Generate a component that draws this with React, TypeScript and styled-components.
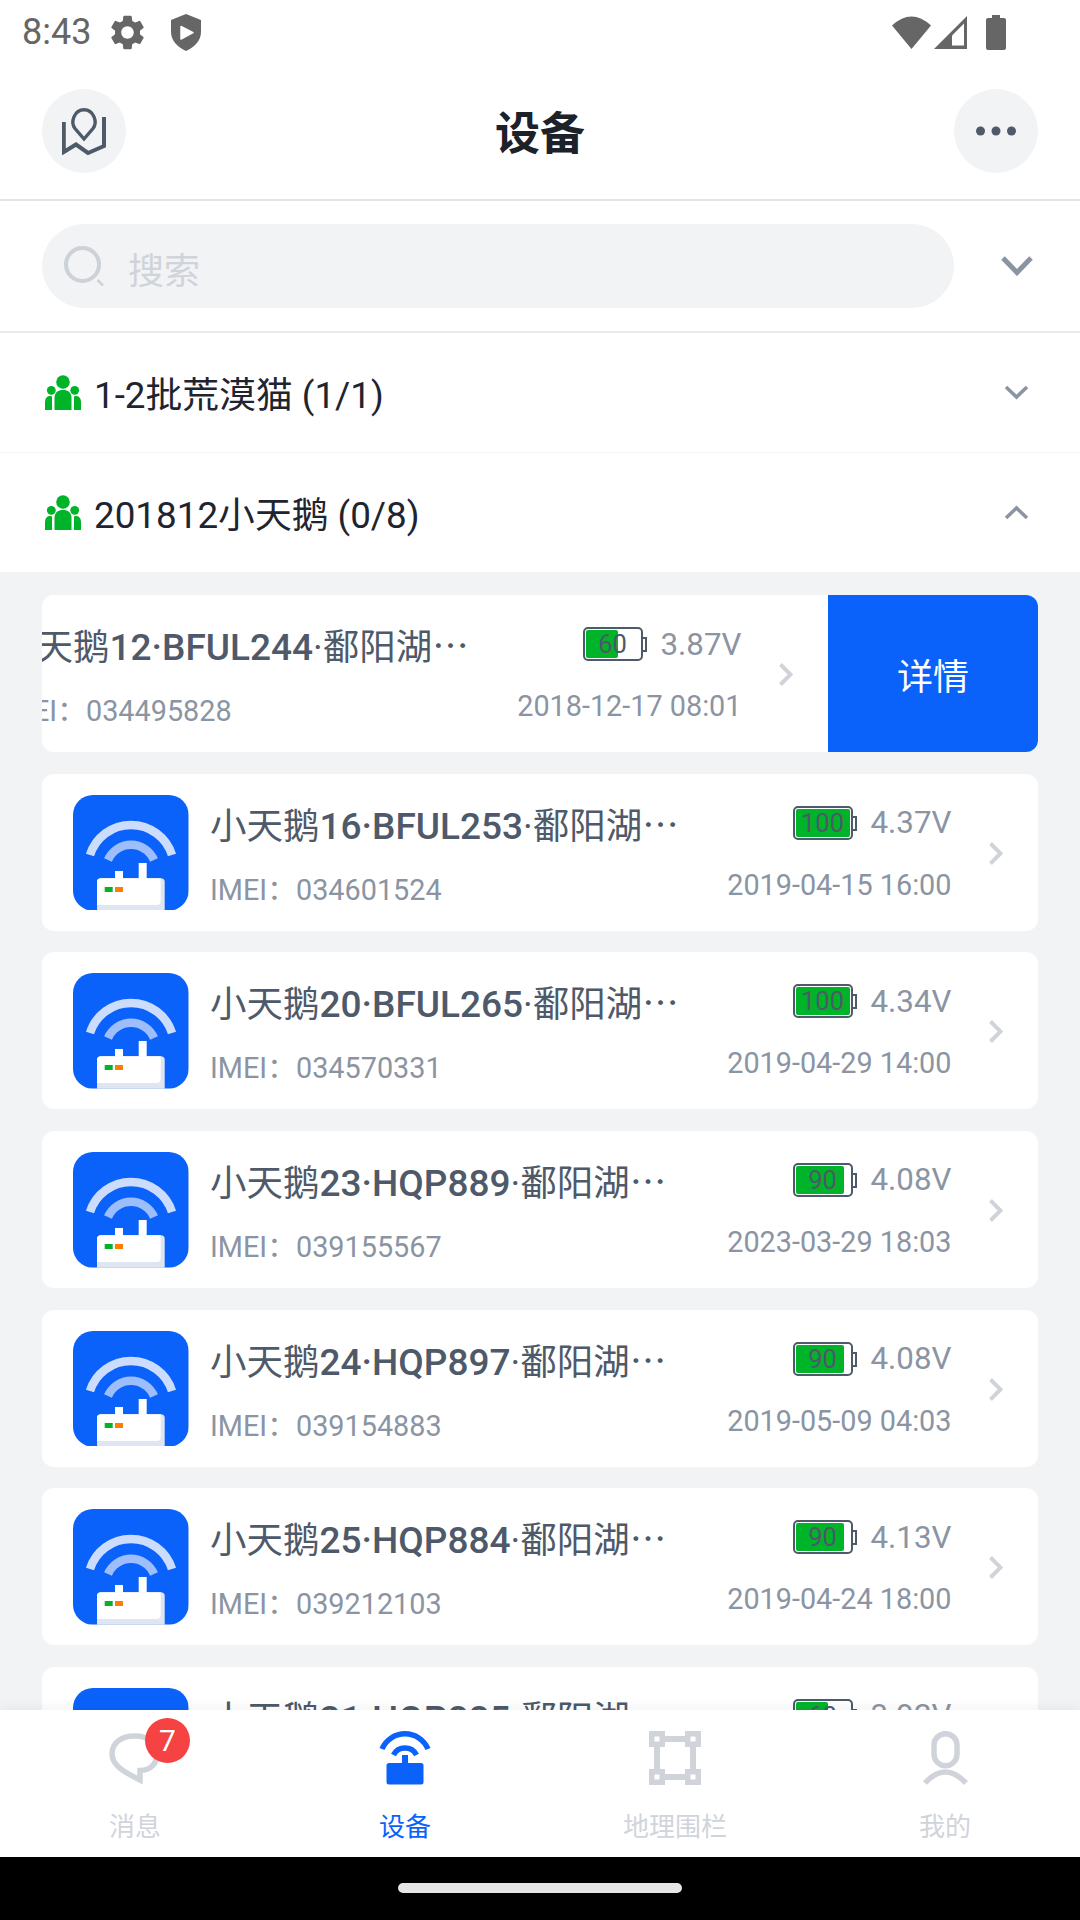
import React from "react";
import styled, { createGlobalStyle } from "styled-components";

const Global = createGlobalStyle`
  html, body { margin: 0; padding: 0; background: #fff; }
  * { box-sizing: border-box; }
  body { font-family: Roboto, "Noto Sans CJK SC", sans-serif; }
`;

const Page = styled.div`
  width: 1080px;
  height: 1920px;
  display: flex;
  flex-direction: column;
  overflow: hidden;
  background: #fff;
`;

const StatusBar = styled.div`
  height: 64px;
  flex: none;
  display: flex;
  align-items: center;
  padding: 0 74px 0 22px;
  color: #666;
`;
const Time = styled.span`
  font-size: 36px;
  line-height: 64px;
  width: 89px;
`;
const StatusRight = styled.div`
  margin-left: auto;
  display: flex;
  align-items: center;
`;

const Header = styled.header`
  height: 137px;
  flex: none;
  display: flex;
  align-items: flex-start;
  justify-content: space-between;
  padding: 25px 42px 0;
  border-bottom: 2px solid #e2e4e7;
`;
const RoundButton = styled.div`
  width: 84px;
  height: 84px;
  border-radius: 50%;
  background: #f2f3f5;
  display: flex;
  align-items: center;
  justify-content: center;
`;
const Title = styled.h1`
  margin: 0;
  font-size: 45px;
  line-height: 84px;
  font-weight: 700;
  color: #1d2129;
  font-family: "Noto Sans CJK SC", sans-serif;
`;

const SearchRow = styled.div`
  height: 132px;
  flex: none;
  display: flex;
  padding: 23px 47px 0 42px;
  justify-content: space-between;
  border-bottom: 2px solid #e8e9ec;
`;
const SearchPill = styled.div`
  width: 912px;
  height: 84px;
  border-radius: 42px;
  background: #f2f3f5;
  display: flex;
  align-items: center;
  padding-left: 22px;
  gap: 24px;
`;
const Placeholder = styled.span`
  font-size: 36px;
  line-height: 84px;
  padding-top: 4px;
  color: #d0d4da;
  font-family: "Noto Sans CJK SC", sans-serif;
`;
const SearchChevron = styled.div`
  height: 84px;
  display: flex;
  align-items: center;
`;

const GroupRow = styled.div`
  height: 120px;
  flex: none;
  display: flex;
  align-items: center;
  padding: 0 51px 0 45px;
  background: #fff;
  border-bottom: 1px solid #f2f3f5;
`;
const GroupName = styled.span`
  margin-left: 13px;
  margin-top: -2px;
  font-size: 36.8px;
  color: #1f2530;
  flex: 1;
`;

const List = styled.div`
  flex: 1;
  min-height: 0;
  overflow: hidden;
  background: #f2f3f5;
  padding: 22px 42px 0;
  display: flex;
  flex-direction: column;
  gap: 21.67px;
`;
const Card = styled.div`
  flex: none;
  height: 157px;
  border-radius: 12px;
  background: #fff;
  overflow: hidden;
  display: flex;
`;
const CardBody = styled.div<{ $offset: number }>`
  flex: 0 0 996px;
  margin-left: ${(p) => -p.$offset}px;
  display: flex;
  padding: 21px 0 0 31.3px;
  background: #fff;
`;
const DetailAction = styled.div`
  flex: 0 0 210px;
  height: 157px;
  background: #0b62fb;
  color: #fff;
  font-size: 36px;
  display: flex;
  align-items: center;
  justify-content: center;
  font-family: "Noto Sans CJK SC", sans-serif;
`;
const DeviceIcon = styled.svg`
  flex: none;
  width: 115.7px;
  height: 115.7px;
  display: block;
`;
const Main = styled.div`
  flex: 0 0 470px;
  margin-left: 21px;
  min-width: 0;
`;
const DeviceName = styled.div`
  font-family: "Noto Sans CJK SC", sans-serif;
  font-size: 36.5px;
  line-height: 46px;
  margin-top: 6px;
  color: #4e5969;
  white-space: nowrap;
  overflow: hidden;
  text-overflow: ellipsis;
`;
const Code = styled.span`
  font-family: Roboto, sans-serif;
  font-weight: 500;
  font-size: 37px;
`;
const Dot = styled.span`
  font-family: Roboto, sans-serif;
  font-size: 37px;
`;
const Imei = styled.div`
  font-size: 28.8px;
  line-height: 40px;
  margin-top: 20px;
  color: #8a94a3;
`;
const Meta = styled.div`
  flex: 0 0 271.5px;
  display: flex;
  flex-direction: column;
  align-items: flex-end;
  padding-top: 11px;
`;
const PowerRow = styled.div`
  height: 34px;
  display: flex;
  align-items: center;
  gap: 14px;
  color: #8a94a3;
  font-size: 31.3px;
`;
const Time2 = styled.div`
  margin-top: 25px;
  font-size: 28.8px;
  line-height: 40px;
  color: #8a94a3;
`;
const Chevron = styled.div`
  margin-left: 37.5px;
  margin-top: 47px;
`;

const Battery = styled.div`
  position: relative;
  width: 64px;
  height: 34px;
  padding-right: 4px;
`;
const BatteryShell = styled.div`
  width: 60px;
  height: 34px;
  border: 2.5px solid #4e5969;
  border-radius: 5px;
  padding: 1px;
`;
const BatteryFill = styled.div`
  height: 100%;
  border-radius: 2px;
  background: #00b42a;
`;
const BatteryTip = styled.div`
  position: absolute;
  right: 0;
  top: 10px;
  width: 5px;
  height: 15px;
  border: 2px solid #4e5969;
  border-left: none;
`;
const BatteryText = styled.span`
  position: absolute;
  left: 0;
  top: 0;
  width: 60px;
  text-align: center;
  font-size: 25.5px;
  line-height: 35px;
  color: #4e5969;
`;

const TabBar = styled.nav`
  position: relative;
  z-index: 2;
  height: 147px;
  flex: none;
  display: grid;
  grid-template-columns: repeat(4, 1fr);
  background: #fff;
  box-shadow: 0 -3px 12px rgba(0, 0, 0, 0.05);
  padding-top: 21px;
`;
const Tab = styled.div<{ $active?: boolean }>`
  display: flex;
  flex-direction: column;
  align-items: center;
  color: ${(p) => (p.$active ? "#0b62fb" : "#d0d4da")};
`;
const TabIconWrap = styled.div`
  position: relative;
  width: 60px;
  height: 54px;
`;
const TabLabel = styled.span`
  margin-top: 22px;
  font-size: 26px;
  line-height: 36px;
  font-family: "Noto Sans CJK SC", sans-serif;
`;
const Badge = styled.span`
  position: absolute;
  left: 40px;
  top: -13px;
  width: 45px;
  height: 45px;
  border-radius: 50%;
  background: #f54242;
  color: #fff;
  font-size: 30px;
  line-height: 45px;
  text-align: center;
`;

const NavBar = styled.div`
  height: 63px;
  flex: none;
  background: #000;
  display: flex;
  justify-content: center;
  padding-top: 26px;
`;
const NavPill = styled.div`
  width: 284px;
  height: 10px;
  border-radius: 5px;
  background: #e6e6e6;
`;

const Gear = () => (
  <svg width="33" height="35" viewBox="2.5 2 19 20" fill="#666">
    <path d="M19.14 12.94c.04-.3.06-.61.06-.94 0-.32-.02-.64-.07-.94l2.03-1.58c.18-.14.23-.41.12-.61l-1.92-3.32c-.12-.22-.37-.29-.59-.22l-2.39.96c-.5-.38-1.03-.7-1.62-.94l-.36-2.54c-.04-.24-.24-.41-.48-.41h-3.84c-.24 0-.43.17-.47.41l-.36 2.54c-.59.24-1.13.57-1.62.94l-2.39-.96c-.22-.08-.47 0-.59.22L2.74 8.87c-.12.21-.08.47.12.61l2.03 1.58c-.05.3-.09.63-.09.94s.02.64.07.94l-2.03 1.58c-.18.14-.23.41-.12.61l1.92 3.32c.12.22.37.29.59.22l2.39-.96c.5.38 1.03.7 1.62.94l.36 2.54c.05.24.24.41.48.41h3.84c.24 0 .44-.17.47-.41l.36-2.54c.59-.24 1.13-.56 1.62-.94l2.39.96c.22.08.47 0 .59-.22l1.92-3.32c.12-.22.07-.47-.12-.61l-2.01-1.58zM12 15.6c-1.98 0-3.6-1.62-3.6-3.6s1.62-3.6 3.6-3.6 3.6 1.62 3.6 3.6-1.62 3.6-3.6 3.6z" />
  </svg>
);
const Shield = () => (
  <svg width="30" height="37" viewBox="0 0 30 37" style={{ marginLeft: 27 }}>
    <path d="M15 0 L30 6 V18 C30 27 23 33.5 15 37 C7 33.5 0 27 0 18 V6Z" fill="#666" />
    <path d="M10 12.5 L10 25 L22 18.7Z" fill="#fff" stroke="#fff" strokeWidth="1.5" strokeLinejoin="round" />
  </svg>
);
const Wifi = () => (
  <svg width="39" height="33" viewBox="0 0 39 33" fill="#666">
    <path d="M0 9.5 Q19.5 -8.5 39 9.5 L19.5 33Z" />
  </svg>
);
const Signal = () => (
  <svg width="33" height="33" viewBox="0 0 33 33" style={{ marginLeft: 3 }}>
    <path d="M33 0 V33 H0Z" fill="#666" />
    <path d="M18 29.5 H30 V7.5 L18 19.5Z" fill="#fff" />
  </svg>
);
const PhoneBattery = () => (
  <svg width="20" height="35" viewBox="0 0 20 35" fill="#666" style={{ marginLeft: 19 }}>
    <path d="M6 0 H14 V3 H18 Q20 3 20 5 V33 Q20 35 18 35 H2 Q0 35 0 33 V5 Q0 3 2 3 H6Z" />
  </svg>
);
const MapIcon = () => (
  <svg width="44" height="47" viewBox="0 0 44 47" fill="none" stroke="#4e5969" strokeWidth="3.4">
    <path d="M22 31 L13 20.5 C8 14 12.5 1.7 22 1.7 C31.5 1.7 36 14 31 20.5 Z" />
    <path d="M1.8 14 V44 L14 36.5 L26 45 L42 38 V9" strokeWidth="4" />
  </svg>
);
const Dots = () => (
  <svg width="40" height="10" viewBox="0 0 40 10" fill="#4e5969">
    <circle cx="4.5" cy="5" r="4.5" />
    <circle cx="20" cy="5" r="4.5" />
    <circle cx="35.5" cy="5" r="4.5" />
  </svg>
);
const SearchIcon = () => (
  <svg width="40" height="40" viewBox="0 0 40 40" fill="none" stroke="#cdd2d8">
    <circle cx="18.5" cy="18.5" r="16.5" strokeWidth="4" />
    <path d="M33.5 34 L39 39.5" strokeWidth="2.5" />
  </svg>
);
const ChevronDownBold = () => (
  <svg width="32" height="20" viewBox="0 0 32 20" fill="none" stroke="#8a94a3" strokeWidth="5">
    <path d="M2 2 L16 16.5 L30 2" />
  </svg>
);
const ChevronV = ({ up }: { up?: boolean }) => (
  <svg width="25" height="15" viewBox="0 0 25 15" fill="none" stroke="#8a94a3" strokeWidth="3.5">
    <path d={up ? "M2 13 L12.5 3 L23 13" : "M2 2 L12.5 12 L23 2"} />
  </svg>
);
const ChevronRight = () => (
  <svg width="14" height="23" viewBox="0 0 14 23" fill="none" stroke="#d0d4da" strokeWidth="4" style={{ display: "block" }}>
    <path d="M1.5 1.5 L11.5 11.5 L1.5 21.5" />
  </svg>
);
const GroupIcon = () => (
  <svg width="36" height="35" viewBox="0 0 36 35" fill="#00b42a" style={{ flex: "none" }}>
    <circle cx="18" cy="7" r="6.8" />
    <circle cx="6.3" cy="15.3" r="4.4" />
    <circle cx="29.7" cy="15.3" r="4.4" />
    <path d="M9.5 35 V23 C9.5 17.5 13 15 18 15 C23 15 26.5 17.5 26.5 23 V35Z" />
    <path d="M0 35 V27 C0 23.5 1.5 21.5 4 21 C5 21 6 21 7 21.5 V35Z" />
    <path d="M36 35 V27 C36 23.5 34.5 21.5 32 21 C31 21 30 21 29 21.5 V35Z" />
  </svg>
);
const RouterTile = () => (
  <DeviceIcon viewBox="0 0 115.7 115.7">
    <defs>
      <clipPath id="tile">
        <rect width="115.7" height="115.7" rx="20" />
      </clipPath>
    </defs>
    <g clipPath="url(#tile)">
      <rect width="115.7" height="115.7" fill="#0b62fb" />
      <path d="M17 60 A43 43 0 0 1 99 60" fill="none" stroke="#cbdcfc" strokeWidth="8.5" />
      <path d="M35 65 A25 25 0 0 1 81 65" fill="none" stroke="#9dbefb" strokeWidth="8.5" />
      <rect x="42" y="76" width="8" height="9" fill="#fff" />
      <rect x="65.7" y="68" width="8" height="17" fill="#fff" />
      <path d="M24 116 V87 Q24 83.3 28 83.3 H87.7 Q91.7 83.3 91.7 87 V116Z" fill="#e0e6f1" />
      <path d="M24 110 V87 Q24 83.3 28 83.3 H87.7 V106 Q87.7 110 83.7 110Z" fill="#fff" />
      <rect x="31.7" y="92" width="8" height="5" fill="#00b42a" />
      <rect x="42" y="92" width="8" height="5" fill="#ff7d00" />
    </g>
  </DeviceIcon>
);

const MessageIcon = () => (
  <svg width="60" height="54" viewBox="0 0 60 54" fill="none" stroke="currentColor" strokeWidth="5.5">
    <path d="M35 49 V39.5 C46 39.5 52 32 52 23 C52 11.5 43 5 29.5 5 C16 5 7 12 7 23 C7 35 21 42 35 49Z" />
  </svg>
);
const DeviceTabIcon = () => (
  <svg width="60" height="54" viewBox="0 0 60 54" fill="currentColor">
    <path d="M7 18 A25 25 0 0 1 53 18" fill="none" stroke="currentColor" strokeWidth="5.5" />
    <path d="M18.5 24 A13 13 0 0 1 41.5 24" fill="none" stroke="currentColor" strokeWidth="5.5" />
    <rect x="27" y="24" width="6" height="9" />
    <rect x="11.5" y="32" width="37" height="21.5" rx="2.5" />
  </svg>
);
const FenceIcon = () => (
  <svg width="60" height="54" viewBox="0 0 60 54" fill="currentColor">
    <path
      fillRule="evenodd"
      d="M4 0 H20 V5 H40 V0 H56 V16 H51 V38 H56 V54 H40 V49 H20 V54 H4 V38 H9 V16 H4Z M9.5 5.5 V10.5 H14.5 V5.5Z M45.5 5.5 V10.5 H50.5 V5.5Z M9.5 43.5 V48.5 H14.5 V43.5Z M45.5 43.5 V48.5 H50.5 V43.5Z M20 11 V16 H15 V38 H20 V43 H40 V38 H45 V16 H40 V11Z"
    />
  </svg>
);
const UserIcon = () => (
  <svg width="60" height="54" viewBox="0 0 60 54" fill="none" stroke="currentColor" strokeWidth="5.5">
    <rect x="19" y="2.7" width="23" height="32" rx="11.5" />
    <path d="M10 52 Q30 30 51 52" />
  </svg>
);

type Device = {
  pre: string;
  num: string;
  code: string;
  imei: string;
  level: number;
  volts: string;
  at: string;
  offset?: number;
};
const devices: Device[] = [
  { pre: "小天鹅", num: "12", code: "BFUL244", imei: "034495828", level: 60, volts: "3.87V", at: "2018-12-17 08:01", offset: 210 },
  { pre: "小天鹅", num: "16", code: "BFUL253", imei: "034601524", level: 100, volts: "4.37V", at: "2019-04-15 16:00" },
  { pre: "小天鹅", num: "20", code: "BFUL265", imei: "034570331", level: 100, volts: "4.34V", at: "2019-04-29 14:00" },
  { pre: "小天鹅", num: "23", code: "HQP889", imei: "039155567", level: 90, volts: "4.08V", at: "2023-03-29 18:03" },
  { pre: "小天鹅", num: "24", code: "HQP897", imei: "039154883", level: 90, volts: "4.08V", at: "2019-05-09 04:03" },
  { pre: "小天鹅", num: "25", code: "HQP884", imei: "039212103", level: 90, volts: "4.13V", at: "2019-04-24 18:00" },
  { pre: "小天鹅", num: "31", code: "HQP885", imei: "039212100", level: 60, volts: "3.92V", at: "2019-04-24 18:00" },
];

const DeviceCard = ({ d }: { d: Device }) => (
  <Card>
    <CardBody $offset={d.offset ?? 0}>
      <RouterTile />
      <Main>
        <DeviceName>
          {d.pre}
          <Code>{d.num}·{d.code}</Code>
          <Dot>·</Dot>鄱阳湖保护区域项目
        </DeviceName>
        <Imei>IMEI：{d.imei}</Imei>
      </Main>
      <Meta>
        <PowerRow>
          <Battery>
            <BatteryShell>
              <BatteryFill style={{ width: `${d.level}%` }} />
            </BatteryShell>
            <BatteryTip />
            <BatteryText>{d.level}</BatteryText>
          </Battery>
          {d.volts}
        </PowerRow>
        <Time2>{d.at}</Time2>
      </Meta>
      <Chevron>
        <ChevronRight />
      </Chevron>
    </CardBody>
    {d.offset ? <DetailAction>详情</DetailAction> : null}
  </Card>
);

export default function App() {
  return (
    <Page>
      <Global />
      <StatusBar>
        <Time>8:43</Time>
        <Gear />
        <Shield />
        <StatusRight>
          <Wifi />
          <Signal />
          <PhoneBattery />
        </StatusRight>
      </StatusBar>
      <Header>
        <RoundButton>
          <MapIcon />
        </RoundButton>
        <Title>设备</Title>
        <RoundButton>
          <Dots />
        </RoundButton>
      </Header>
      <SearchRow>
        <SearchPill>
          <SearchIcon />
          <Placeholder>搜索</Placeholder>
        </SearchPill>
        <SearchChevron>
          <ChevronDownBold />
        </SearchChevron>
      </SearchRow>
      <GroupRow>
        <GroupIcon />
        <GroupName>1-2批荒漠猫 (1/1)</GroupName>
        <ChevronV />
      </GroupRow>
      <GroupRow>
        <GroupIcon />
        <GroupName>201812小天鹅 (0/8)</GroupName>
        <ChevronV up />
      </GroupRow>
      <List>
        {devices.map((d) => (
          <DeviceCard key={d.num} d={d} />
        ))}
      </List>
      <TabBar>
        <Tab>
          <TabIconWrap>
            <MessageIcon />
            <Badge>7</Badge>
          </TabIconWrap>
          <TabLabel>消息</TabLabel>
        </Tab>
        <Tab $active>
          <TabIconWrap>
            <DeviceTabIcon />
          </TabIconWrap>
          <TabLabel>设备</TabLabel>
        </Tab>
        <Tab>
          <TabIconWrap>
            <FenceIcon />
          </TabIconWrap>
          <TabLabel>地理围栏</TabLabel>
        </Tab>
        <Tab>
          <TabIconWrap>
            <UserIcon />
          </TabIconWrap>
          <TabLabel>我的</TabLabel>
        </Tab>
      </TabBar>
      <NavBar>
        <NavPill />
      </NavBar>
    </Page>
  );
}
